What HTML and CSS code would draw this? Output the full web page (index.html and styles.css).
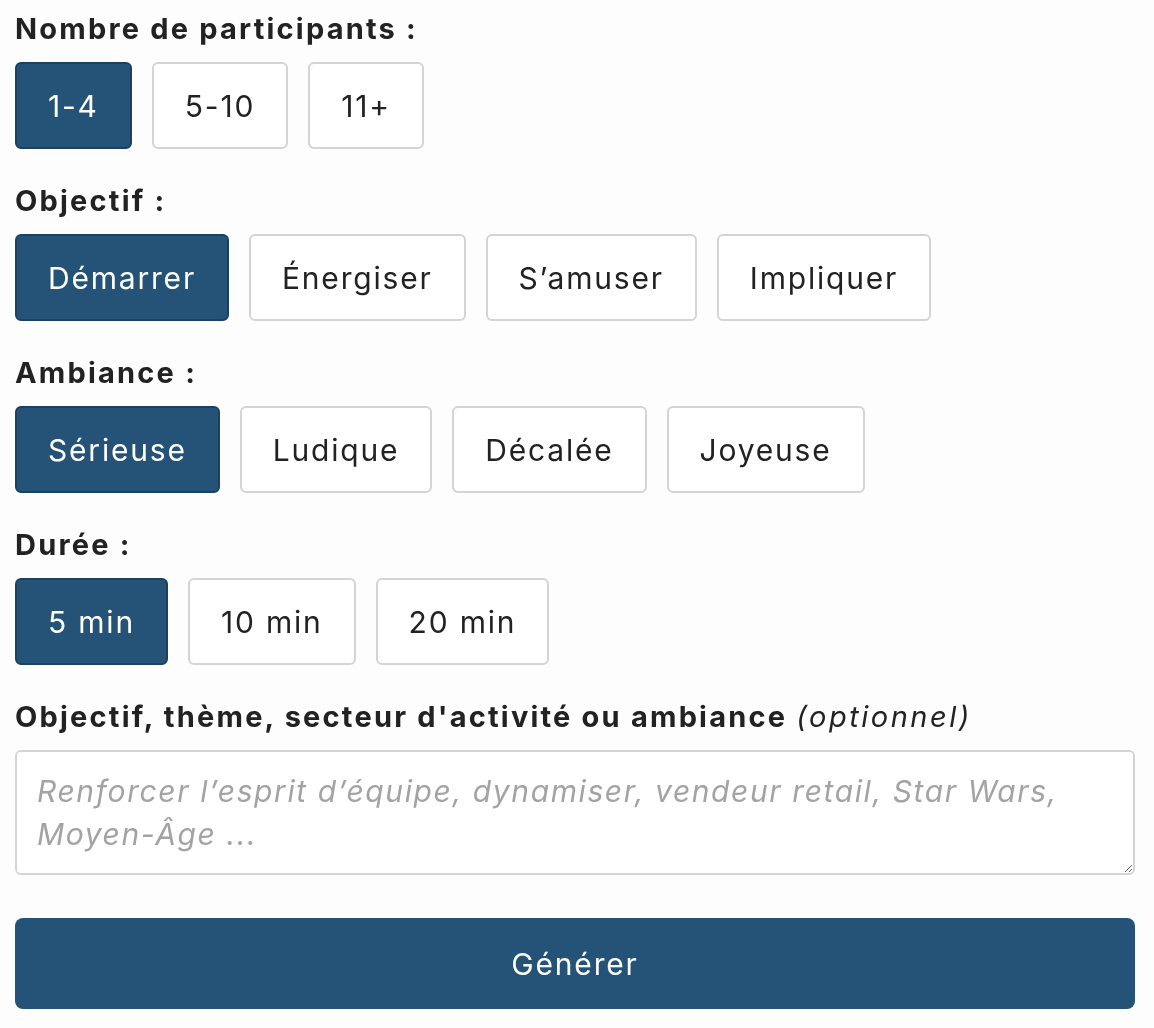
FILE: index.html
```html
<!DOCTYPE html>
<html lang="fr">
<head>
<meta charset="utf-8">
<title>Générateur</title>
<link rel="stylesheet" href="styles.css">
</head>
<body>
<form class="form">
  <div class="group">
    <div class="label">Nombre de participants :</div>
    <div class="options">
      <button type="button" class="opt active">1-4</button>
      <button type="button" class="opt">5-10</button>
      <button type="button" class="opt">11+</button>
    </div>
  </div>
  <div class="group">
    <div class="label">Objectif :</div>
    <div class="options">
      <button type="button" class="opt active">Démarrer</button>
      <button type="button" class="opt">Énergiser</button>
      <button type="button" class="opt">S’amuser</button>
      <button type="button" class="opt">Impliquer</button>
    </div>
  </div>
  <div class="group">
    <div class="label">Ambiance :</div>
    <div class="options">
      <button type="button" class="opt active">Sérieuse</button>
      <button type="button" class="opt">Ludique</button>
      <button type="button" class="opt">Décalée</button>
      <button type="button" class="opt">Joyeuse</button>
    </div>
  </div>
  <div class="group">
    <div class="label">Durée :</div>
    <div class="options">
      <button type="button" class="opt active">5 min</button>
      <button type="button" class="opt">10 min</button>
      <button type="button" class="opt">20 min</button>
    </div>
  </div>
  <div class="group last">
    <div class="label">Objectif, thème, secteur d'activité ou ambiance <span class="optional">(optionnel)</span></div>
    <textarea class="textarea" placeholder="Renforcer l’esprit d’équipe, dynamiser, vendeur retail, Star Wars, Moyen-Âge ..."></textarea>
  </div>
  <button type="button" class="submit">Générer</button>
</form>
</body>
</html>
```
FILE: styles.css
```css
html, body {
  margin: 0;
  padding: 0;
  background: #fdfdfd;
}
body {
  font-family: Inter, "Noto Sans", sans-serif;
  color: #222;
}
.form {
  width: 1120px;
  padding: 8px 0 0 15px;
}
.group {
  margin-bottom: 31px;
}
.group.last {
  margin-bottom: 0;
}
.label {
  font-weight: 700;
  font-size: 29px;
  line-height: 42px;
  letter-spacing: 2.2px;
  margin-bottom: 12px;
  color: #222;
  white-space: nowrap;
}
.optional {
  font-weight: 400;
  font-style: italic;
  letter-spacing: 2.5px;
}
.options {
  display: flex;
  gap: 20px;
}
.opt {
  height: 87px;
  padding: 0 31px;
  font-family: inherit;
  font-size: 30px;
  letter-spacing: 1.8px;
  color: #222;
  background: #fff;
  border: 2px solid #d4d4d4;
  border-radius: 6px;
}
.opt.active {
  background: #245377;
  border-color: #1b4060;
  color: #fff;
}
.textarea {
  display: block;
  box-sizing: border-box;
  width: 1120px;
  height: 125px;
  padding: 18px 20px;
  font-family: inherit;
  font-size: 30px;
  line-height: 43px;
  letter-spacing: 1.6px;
  border: 2px solid #d4d4d4;
  border-radius: 6px;
  background: #fff;
  color: #222;
  resize: vertical;
}
.textarea::placeholder {
  color: #a3a3a3;
  font-style: italic;
}
.submit {
  display: block;
  margin-top: 43px;
  width: 1120px;
  height: 91px;
  font-family: inherit;
  font-size: 30px;
  letter-spacing: 1.8px;
  color: #fff;
  background: #245377;
  border: none;
  border-radius: 8px;
}
```
